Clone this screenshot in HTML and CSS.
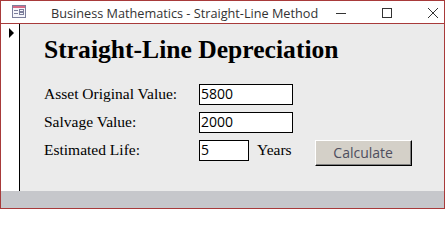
FILE: index.html
```html
<!DOCTYPE html>
<html>
<head>
<meta charset="utf-8">
<title>Business Mathematics - Straight-Line Method</title>
<link rel="stylesheet" href="styles.css">
</head>
<body>
<div class="window">
  <div class="titlebar">
    <svg class="app-icon" width="16" height="16" viewBox="0 0 16 16">
      <rect x="1.5" y="1.5" width="13" height="12" fill="#f6f6fa" stroke="#7c7f9c"/>
      <rect x="2" y="2" width="12" height="2" fill="#d66a86"/>
      <rect x="3" y="6" width="4" height="1" fill="#7c7f9c"/>
      <rect x="3" y="9" width="4" height="1" fill="#7c7f9c"/>
      <rect x="8.5" y="5.5" width="4" height="2" fill="none" stroke="#7c7f9c"/>
      <rect x="8.5" y="8.5" width="4" height="2" fill="none" stroke="#7c7f9c"/>
    </svg>
    <span class="title">Business Mathematics - Straight-Line Method</span>
    <div class="controls">
      <div class="ctl"><svg width="10" height="10" viewBox="0 0 10 10"><path d="M0 5.5H10" stroke="#333" stroke-width="1"/></svg></div>
      <div class="ctl"><svg width="10" height="10" viewBox="0 0 10 10"><rect x="0.5" y="0.5" width="9" height="9" fill="none" stroke="#333"/></svg></div>
      <div class="ctl"><svg width="10" height="10" viewBox="0 0 10 10"><path d="M0 0L10 10M10 0L0 10" stroke="#333" stroke-width="1"/></svg></div>
    </div>
  </div>
  <div class="main">
    <div class="selector">
      <svg width="18" height="20" viewBox="0 0 18 20"><polygon points="8,4 8,14 13,9" fill="#000"/></svg>
    </div>
    <div class="form">
      <h1 class="heading">Straight-Line Depreciation</h1>
      <div class="fields">
        <div class="row">
          <span class="label">Asset Original Value:</span>
          <div class="textbox wide">5800</div>
        </div>
        <div class="row">
          <span class="label">Salvage Value:</span>
          <div class="textbox wide">2000</div>
        </div>
        <div class="row">
          <span class="label">Estimated Life:</span>
          <div class="textbox narrow">5</div>
          <span class="unit">Years</span>
          <button class="btn">Calculate</button>
        </div>
      </div>
    </div>
  </div>
  <div class="statusbar"></div>
</div>
</body>
</html>
```
FILE: styles.css
```css
html, body {
  margin: 0;
  padding: 0;
  background: #ffffff;
}
.window {
  width: 445px;
  height: 209px;
  box-sizing: border-box;
  border: 1px solid #a83a3a;
  display: flex;
  flex-direction: column;
  overflow: hidden;
}
.titlebar {
  height: 22px;
  flex: none;
  background: #ffffff;
  border-bottom: 1px solid #a83a3a;
  display: flex;
  align-items: flex-start;
}
.app-icon {
  margin-left: 10px;
  margin-top: 3px;
  flex: none;
}
.title {
  margin-left: 24px;
  font-family: "Segoe UI", "Open Sans", sans-serif;
  font-size: 12.7px;
  line-height: 16px;
  margin-top: 4px;
  color: #333333;
  white-space: nowrap;
}
.controls {
  margin-left: auto;
  display: flex;
}
.ctl {
  width: 46px;
  height: 22px;
  display: flex;
  justify-content: center;
  padding-top: 7px;
  box-sizing: border-box;
}
.main {
  flex: 1;
  display: flex;
  min-height: 0;
}
.selector {
  width: 18px;
  flex: none;
  background: #ffffff;
  border-right: 1px solid #000000;
}
.selector svg {
  display: block;
}
.form {
  flex: 1;
  background: #ebebeb;
  padding: 11px 0 0 24px;
}
.heading {
  margin: 0;
  font-family: "Liberation Serif", "Times New Roman", serif;
  font-weight: bold;
  font-size: 25.6px;
  line-height: 29px;
  color: #000000;
}
.fields {
  margin-top: 20px;
  display: flex;
  flex-direction: column;
  gap: 7px;
}
.row {
  display: flex;
  align-items: flex-start;
}
.label, .unit {
  font-family: "Liberation Serif", "Times New Roman", serif;
  font-size: 15.5px;
  line-height: 20px;
  color: #000000;
}
.label {
  width: 155px;
  flex: none;
}
.unit {
  margin-left: 8px;
}
.textbox {
  height: 21px;
  box-sizing: border-box;
  border: 1px solid #000000;
  background: #ffffff;
  font-family: "Segoe UI", "Open Sans", sans-serif;
  font-size: 14px;
  line-height: 17px;
  padding-left: 1px;
  color: #000000;
}
.wide {
  width: 94px;
}
.narrow {
  width: 50px;
}
.btn {
  margin-left: 23px;
  width: 97px;
  height: 26px;
  box-sizing: border-box;
  background: #d4d0c8;
  border-style: solid;
  border-width: 1px;
  border-color: #ffffff #000000 #000000 #ffffff;
  box-shadow: inset -1px -1px 0 #808080;
  font-family: "Segoe UI", "Open Sans", sans-serif;
  font-size: 14px;
  color: #4e4e5e;
  padding: 0 0 1px 0;
}
.statusbar {
  height: 17px;
  flex: none;
  background: #c6c7cb;
}
```
